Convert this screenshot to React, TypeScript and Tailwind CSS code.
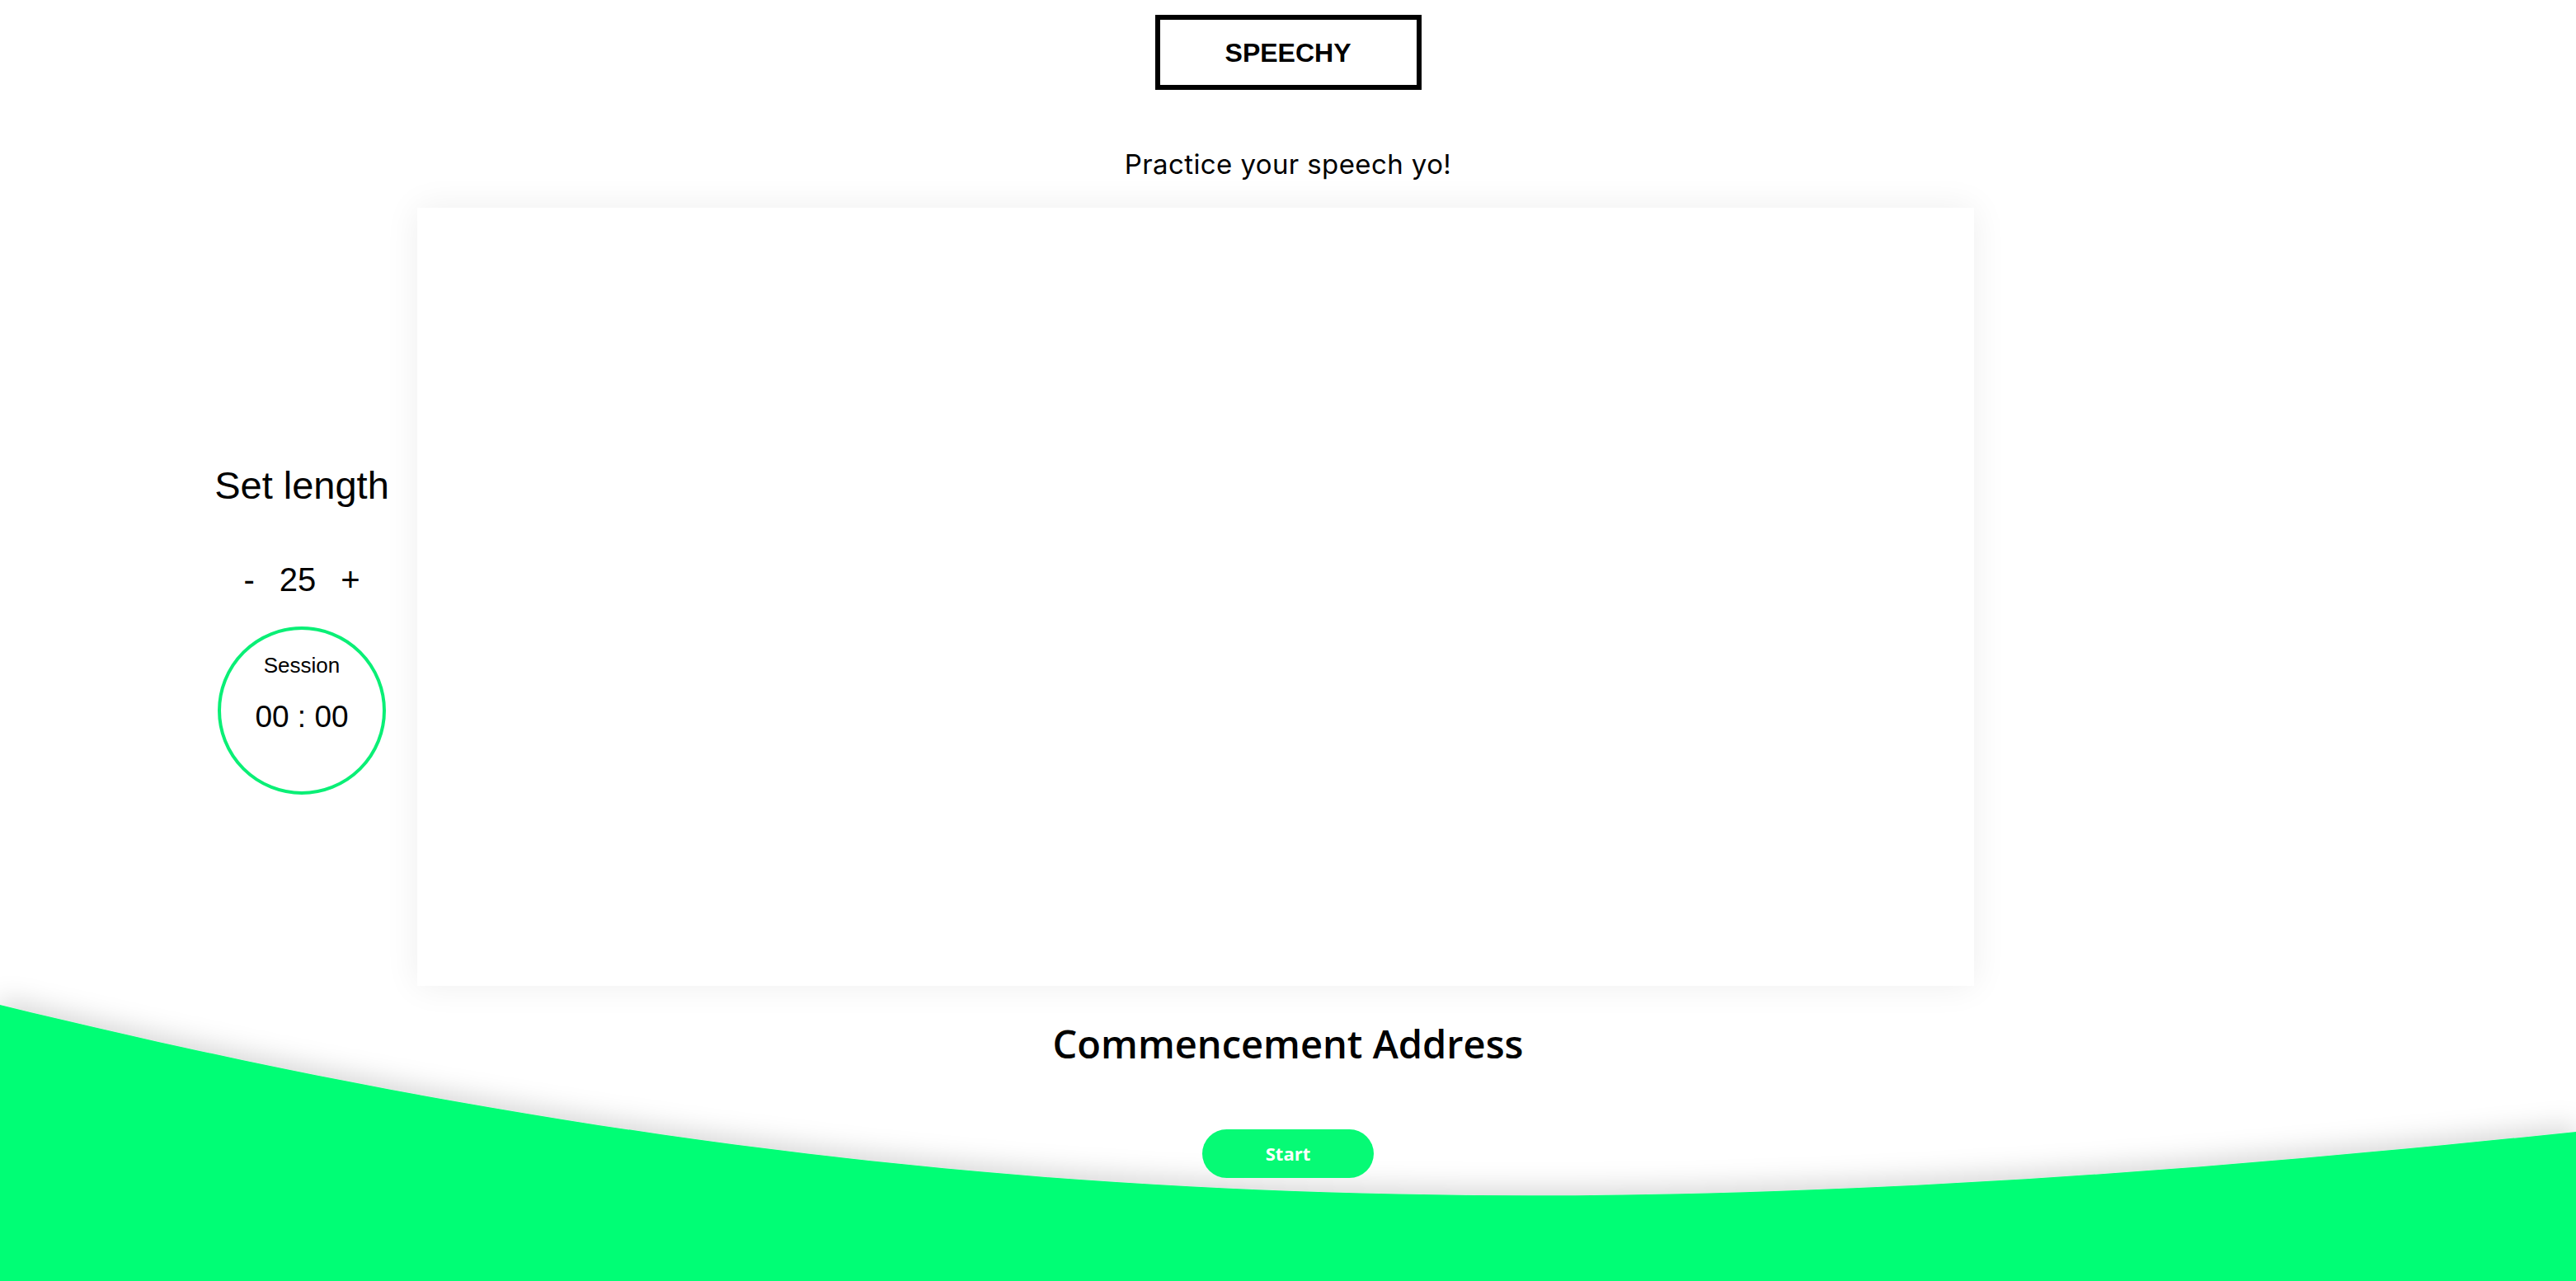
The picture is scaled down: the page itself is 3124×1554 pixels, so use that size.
import React from "react";

// green wave at the bottom, one smooth cubic from left edge to right edge
const wavePath =
  "M0,1219 C1150,1500 2000,1490 3124,1373 L3124,1554 L0,1554 Z";

function Wave() {
  return (
    <svg
      className="absolute bottom-0 left-0 z-0 h-[454px] w-full"
      viewBox="0 1100 3124 454"
      preserveAspectRatio="none"
    >
      <defs>
        <filter id="waveShadow" x="-5%" y="-60%" width="110%" height="200%">
          <feDropShadow
            dx="0"
            dy="-8"
            stdDeviation="16"
            floodColor="#000"
            floodOpacity="0.16"
          />
        </filter>
      </defs>
      <path d={wavePath} fill="#04fe74" filter="url(#waveShadow)" />
    </svg>
  );
}

function Timer() {
  return (
    <div className="flex w-[280px] shrink-0 flex-col items-center pt-[310px] font-['Liberation_Sans',Arial,sans-serif] text-black">
      <h2 className="text-[47px] leading-[54px]">Set length</h2>
      <div className="mt-[64px] flex items-center gap-[30px] text-[40px] leading-[46px]">
        <button>-</button>
        <span>25</span>
        <button>+</button>
      </div>
      <div className="mt-[34px] flex h-[204px] w-[204px] flex-col items-center rounded-full border-4 border-[#0aef76] pt-[28px]">
        <p className="text-[26px] leading-[30px]">Session</p>
        <p className="mt-[27px] text-[37px] leading-[42px]">00 : 00</p>
      </div>
    </div>
  );
}

export default function App() {
  return (
    <div className="relative h-screen w-full overflow-hidden bg-white">
      <Wave />
      <div className="relative z-10 flex flex-col items-center">
        <div className="mt-[18px] flex h-[91px] w-[323px] items-center justify-center border-[6px] border-black">
          <h1 className="font-['Liberation_Sans',Arial,sans-serif] text-[32px] font-bold leading-none text-black">
            SPEECHY
          </h1>
        </div>
        <p className="mt-[70px] font-['Inter',sans-serif] text-[33px] leading-[40px] tracking-[0.4px] text-black">
          Practice your speech yo!
        </p>
        <div className="mt-[33px] flex w-full pl-[226px]">
          <Timer />
          <div className="h-[944px] w-[1888px] bg-white shadow-[0_0_40px_rgba(0,0,0,0.07)]"></div>
        </div>
        <h2 className="mt-[42px] font-['Open_Sans',sans-serif] text-[47px] font-semibold leading-[56px] text-black">
          Commencement Address
        </h2>
        <button className="mt-[76px] h-[59px] w-[208px] rounded-full bg-[#06fa75] font-['Open_Sans',sans-serif] text-[22px] font-bold text-white">
          Start
        </button>
      </div>
    </div>
  );
}
